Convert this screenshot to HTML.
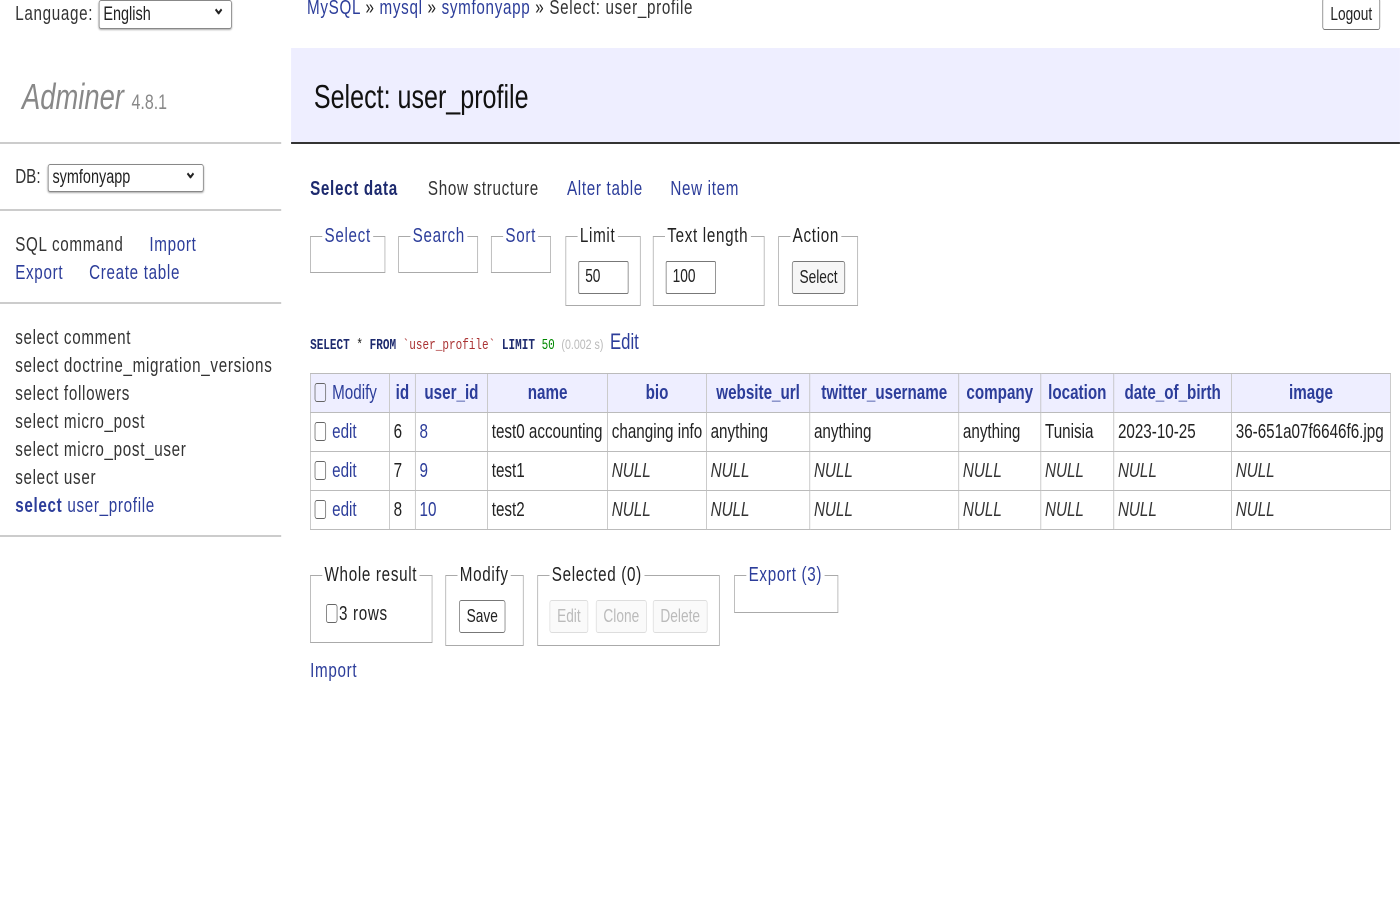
<!DOCTYPE html>
<html><head><meta charset="utf-8"><style>
html,body{margin:0;padding:0;width:1400px;height:900px;overflow:hidden;background:#fff;}
#w{position:absolute;left:0;top:0;width:1842px;height:900px;transform:scaleX(0.76);transform-origin:0 0;font-family:"Liberation Sans",sans-serif;color:#222;font-size:20px;}
.a{position:absolute;white-space:nowrap;}
.ls{letter-spacing:0.9px;}
a,.l{color:#2c3d9a;text-decoration:none;}
.hr{position:absolute;left:0;width:370px;height:2px;background:#ccc;}
.sel{position:absolute;border:1px solid #888;border-radius:3px;background:#fff;font-size:19px;padding-left:5px;box-sizing:border-box;box-shadow:0 1px 2px #aaa;}
.sel:after{content:"⌄";position:absolute;right:8px;top:-6px;font-weight:bold;font-size:20px;}
.fs{position:absolute;border:1px solid #aaa;box-sizing:border-box;}
.lg{position:absolute;top:-13px;left:15px;background:#fff;padding:0 3px;line-height:24px;font-size:20px;letter-spacing:0.9px;}
.inp{position:absolute;border:1px solid #777;border-radius:2px;box-sizing:border-box;font-size:18px;padding:4px 8px;height:33px;}
.btn{position:absolute;border:1px solid #777;border-radius:3px;background:#f6f6f6;box-sizing:border-box;font-size:18px;text-align:center;line-height:30px;height:33px;}
.dis{color:#bbb;border-color:#ddd;background:#fafafa;}
table{position:absolute;left:408px;top:373px;border-collapse:collapse;table-layout:fixed;font-size:20px;}
td,th{border:1px solid #bbb;padding:0 5px;height:38px;white-space:nowrap;overflow:hidden;text-align:left;}
th{background:#eef;color:#2c3d9a;text-align:center;}
th.m{font-weight:normal;text-align:left;}
.cb{display:inline-block;width:13px;height:17px;border:1px solid #666;border-radius:3px;vertical-align:-3px;margin-right:8px;}
i{color:#333;}
.dk{color:#333;}
</style></head><body><div id="w">
<div class="a ls" style="left:20px;top:3px;color:#333;">Language:</div>
<div class="sel" style="left:130px;top:0;width:175px;height:29px;line-height:27px;">English</div>
<div class="a" style="left:29px;top:76px;font-size:36px;font-style:italic;color:#888;">Adminer <span style="font-size:21px;font-style:normal;">4.8.1</span></div>
<div class="hr" style="top:142px;"></div>
<div class="a" style="left:20px;top:166px;color:#333;">DB:</div>
<div class="sel" style="left:63px;top:164px;width:205px;height:28px;line-height:26px;">symfonyapp</div>
<div class="hr" style="top:209px;"></div>
<div class="a ls" style="left:20px;top:231px;line-height:28px;"><span class="dk">SQL command</span><span style="display:inline-block;width:34px"></span><a>Import</a><br><a>Export</a><span style="display:inline-block;width:34px"></span><a>Create table</a></div>
<div class="hr" style="top:302px;"></div>
<div class="a ls dk" style="left:20px;top:324px;line-height:28px;">select comment<br>select doctrine_migration_versions<br>select followers<br>select micro_post<br>select micro_post_user<br>select user<br><b class="l">select</b> <span class="l">user_profile</span></div>
<div class="hr" style="top:535px;"></div>

<div class="a ls" style="left:404px;top:-3px;"><a>MySQL</a> » <a>mysql</a> » <a>symfonyapp</a> » <span class="dk">Select: user_profile</span></div>
<div class="btn" style="left:1740px;top:-2px;width:76px;height:32px;background:#fff;">Logout</div>
<div class="a" style="left:383px;top:48px;width:1459px;height:94px;background:#eef;border-bottom:2px solid #333;"></div>
<div class="a" style="left:413px;top:78px;font-size:33px;color:#111;">Select: user_profile</div>

<div class="a ls" style="left:408px;top:178px;"><b class="l" style="color:#1d2a6e">Select data</b></div>
<div class="a ls" style="left:563px;top:178px;color:#333;">Show structure</div>
<div class="a ls" style="left:746px;top:178px;"><a>Alter table</a></div>
<div class="a ls" style="left:882px;top:178px;"><a>New item</a></div>

<div class="fs" style="left:408px;top:236px;width:99px;height:37px;"><span class="lg l">Select</span></div>
<div class="fs" style="left:524px;top:236px;width:105px;height:37px;"><span class="lg l">Search</span></div>
<div class="fs" style="left:646px;top:236px;width:79px;height:37px;"><span class="lg l">Sort</span></div>
<div class="fs" style="left:744px;top:236px;width:99px;height:70px;"><span class="lg">Limit</span><div class="inp" style="left:16px;top:24px;width:66px;">50</div></div>
<div class="fs" style="left:859px;top:236px;width:147px;height:70px;"><span class="lg">Text length</span><div class="inp" style="left:16px;top:24px;width:66px;">100</div></div>
<div class="fs" style="left:1024px;top:236px;width:105px;height:70px;"><span class="lg">Action</span><div class="btn" style="left:17px;top:24px;width:70px;">Select</div></div>

<div class="a" style="left:408px;top:329px;font-family:'Liberation Mono',monospace;font-size:14.5px;"><b style="color:#1d2a6e">SELECT</b> * <b style="color:#1d2a6e">FROM</b> <span style="color:#a33">`user_profile`</span> <b style="color:#1d2a6e">LIMIT</b> <span style="color:#080">50</span> <span style="color:#bbb;font-family:'Liberation Sans';font-size:14px;">(0.002 s)</span> <a style="font-family:'Liberation Sans';font-size:22px;">Edit</a></div>

<table>
<colgroup><col style="width:104px"><col style="width:34px"><col style="width:95px"><col style="width:158px"><col style="width:129px"><col style="width:136px"><col style="width:196px"><col style="width:108px"><col style="width:96px"><col style="width:155px"><col style="width:209px"></colgroup>
<tr><th class="m"><span class="cb"></span>Modify</th><th>id</th><th>user_id</th><th>name</th><th>bio</th><th>website_url</th><th>twitter_username</th><th>company</th><th>location</th><th>date_of_birth</th><th>image</th></tr>
<tr><td><span class="cb"></span><a>edit</a></td><td>6</td><td><a>8</a></td><td>test0 accounting</td><td>changing info</td><td>anything</td><td>anything</td><td>anything</td><td>Tunisia</td><td>2023-10-25</td><td>36-651a07f6646f6.jpg</td></tr>
<tr><td><span class="cb"></span><a>edit</a></td><td>7</td><td><a>9</a></td><td>test1</td><td><i>NULL</i></td><td><i>NULL</i></td><td><i>NULL</i></td><td><i>NULL</i></td><td><i>NULL</i></td><td><i>NULL</i></td><td><i>NULL</i></td></tr>
<tr><td><span class="cb"></span><a>edit</a></td><td>8</td><td><a>10</a></td><td>test2</td><td><i>NULL</i></td><td><i>NULL</i></td><td><i>NULL</i></td><td><i>NULL</i></td><td><i>NULL</i></td><td><i>NULL</i></td><td><i>NULL</i></td></tr>
</table>

<div class="fs" style="left:408px;top:575px;width:161px;height:68px;"><span class="lg">Whole result</span><div class="a ls" style="left:20px;top:27px;"><span class="cb" style="margin-right:2px"></span>3 rows</div></div>
<div class="fs" style="left:586px;top:575px;width:103px;height:71px;"><span class="lg">Modify</span><div class="btn" style="left:17px;top:24px;width:61px;background:#fff;">Save</div></div>
<div class="fs" style="left:707px;top:575px;width:240px;height:71px;"><span class="lg">Selected (0)</span><div class="btn dis" style="left:15px;top:24px;width:51px;">Edit</div><div class="btn dis" style="left:76px;top:24px;width:67px;">Clone</div><div class="btn dis" style="left:151px;top:24px;width:72px;">Delete</div></div>
<div class="fs" style="left:966px;top:575px;width:137px;height:38px;"><span class="lg l">Export (3)</span></div>
<div class="a ls" style="left:408px;top:660px;"><a>Import</a></div>
</div></body></html>
